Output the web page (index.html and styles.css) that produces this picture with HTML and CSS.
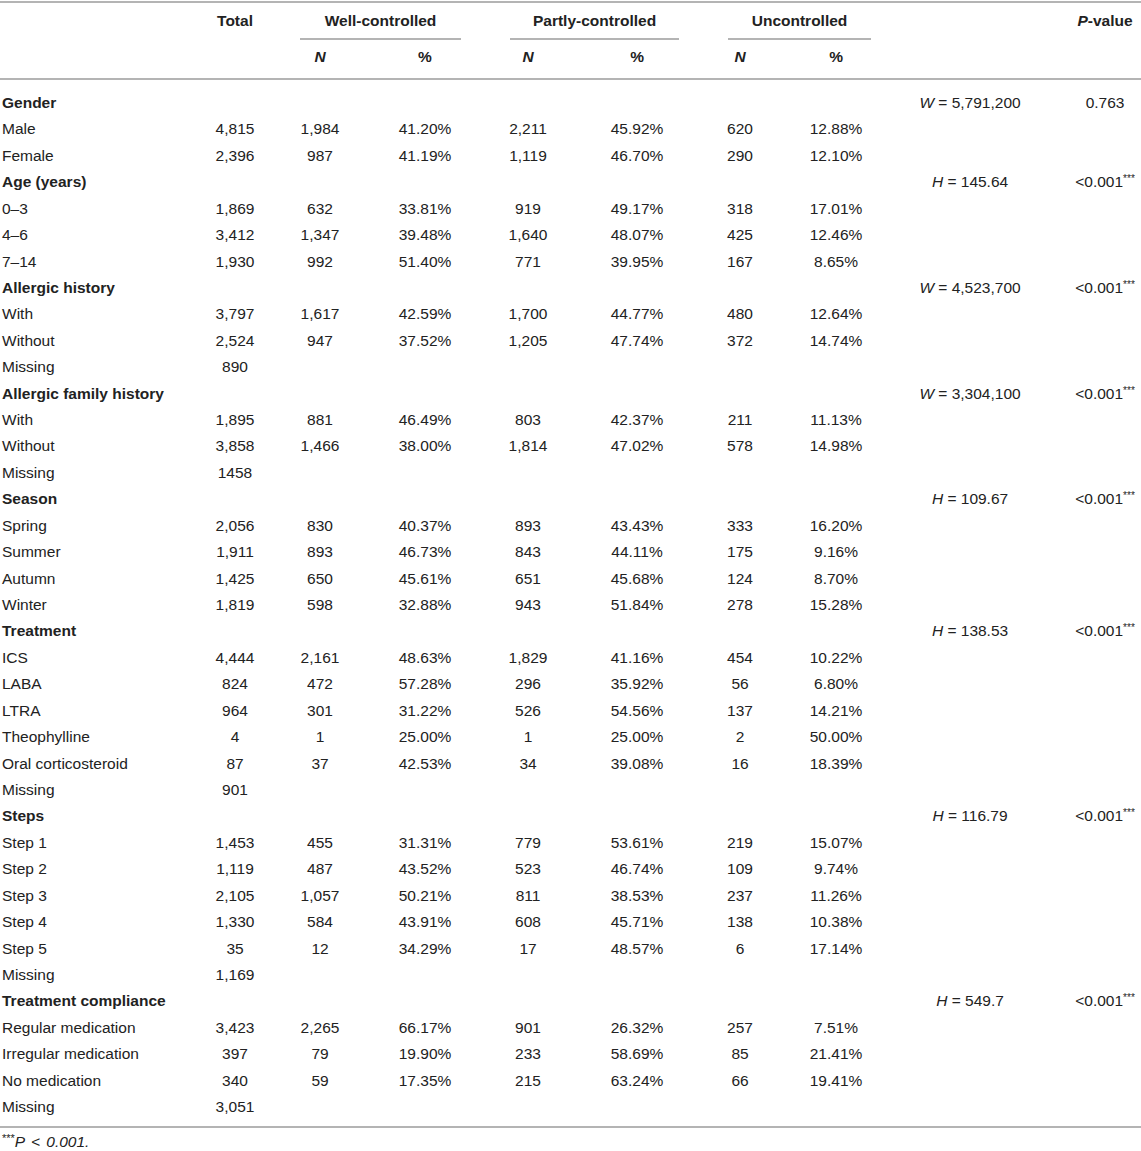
FILE: index.html
```html
<!DOCTYPE html>
<html lang="en">
<head>
<meta charset="utf-8">
<title>Asthma control table</title>
<link rel="stylesheet" href="styles.css">
</head>
<body>
<table class="tbl">
  <colgroup>
    <col class="c-label"><col class="c-total"><col class="c-wn"><col class="c-wp"><col class="c-pn"><col class="c-pp"><col class="c-un"><col class="c-up"><col class="c-stat"><col class="c-p">
  </colgroup>
  <thead>
    <tr class="h1">
      <th></th>
      <th>Total</th>
      <th colspan="2" class="grp"><div class="grp-in">Well-controlled</div></th>
      <th colspan="2" class="grp"><div class="grp-in">Partly-controlled</div></th>
      <th colspan="2" class="grp"><div class="grp-in">Uncontrolled</div></th>
      <th></th>
      <th class="pcol"><i>P</i>-value</th>
    </tr>
    <tr class="h2">
      <th></th><th></th>
      <th><i>N</i></th><th>%</th>
      <th><i>N</i></th><th>%</th>
      <th><i>N</i></th><th>%</th>
      <th></th><th></th>
    </tr>
  </thead>
  <tbody>
    <tr class="cat"><td>Gender</td><td></td><td></td><td></td><td></td><td></td><td></td><td></td><td><i>W</i> = 5,791,200</td><td class="pcol">0.763</td></tr>
    <tr><td>Male</td><td>4,815</td><td>1,984</td><td>41.20%</td><td>2,211</td><td>45.92%</td><td>620</td><td>12.88%</td><td></td><td></td></tr>
    <tr><td>Female</td><td>2,396</td><td>987</td><td>41.19%</td><td>1,119</td><td>46.70%</td><td>290</td><td>12.10%</td><td></td><td></td></tr>
    <tr class="cat"><td>Age (years)</td><td></td><td></td><td></td><td></td><td></td><td></td><td></td><td><i>H</i> = 145.64</td><td class="pcol">&lt;0.001<sup>***</sup></td></tr>
    <tr><td>0–3</td><td>1,869</td><td>632</td><td>33.81%</td><td>919</td><td>49.17%</td><td>318</td><td>17.01%</td><td></td><td></td></tr>
    <tr><td>4–6</td><td>3,412</td><td>1,347</td><td>39.48%</td><td>1,640</td><td>48.07%</td><td>425</td><td>12.46%</td><td></td><td></td></tr>
    <tr><td>7–14</td><td>1,930</td><td>992</td><td>51.40%</td><td>771</td><td>39.95%</td><td>167</td><td>8.65%</td><td></td><td></td></tr>
    <tr class="cat"><td>Allergic history</td><td></td><td></td><td></td><td></td><td></td><td></td><td></td><td><i>W</i> = 4,523,700</td><td class="pcol">&lt;0.001<sup>***</sup></td></tr>
    <tr><td>With</td><td>3,797</td><td>1,617</td><td>42.59%</td><td>1,700</td><td>44.77%</td><td>480</td><td>12.64%</td><td></td><td></td></tr>
    <tr><td>Without</td><td>2,524</td><td>947</td><td>37.52%</td><td>1,205</td><td>47.74%</td><td>372</td><td>14.74%</td><td></td><td></td></tr>
    <tr><td>Missing</td><td>890</td><td></td><td></td><td></td><td></td><td></td><td></td><td></td><td></td></tr>
    <tr class="cat"><td>Allergic family history</td><td></td><td></td><td></td><td></td><td></td><td></td><td></td><td><i>W</i> = 3,304,100</td><td class="pcol">&lt;0.001<sup>***</sup></td></tr>
    <tr><td>With</td><td>1,895</td><td>881</td><td>46.49%</td><td>803</td><td>42.37%</td><td>211</td><td>11.13%</td><td></td><td></td></tr>
    <tr><td>Without</td><td>3,858</td><td>1,466</td><td>38.00%</td><td>1,814</td><td>47.02%</td><td>578</td><td>14.98%</td><td></td><td></td></tr>
    <tr><td>Missing</td><td>1458</td><td></td><td></td><td></td><td></td><td></td><td></td><td></td><td></td></tr>
    <tr class="cat"><td>Season</td><td></td><td></td><td></td><td></td><td></td><td></td><td></td><td><i>H</i> = 109.67</td><td class="pcol">&lt;0.001<sup>***</sup></td></tr>
    <tr><td>Spring</td><td>2,056</td><td>830</td><td>40.37%</td><td>893</td><td>43.43%</td><td>333</td><td>16.20%</td><td></td><td></td></tr>
    <tr><td>Summer</td><td>1,911</td><td>893</td><td>46.73%</td><td>843</td><td>44.11%</td><td>175</td><td>9.16%</td><td></td><td></td></tr>
    <tr><td>Autumn</td><td>1,425</td><td>650</td><td>45.61%</td><td>651</td><td>45.68%</td><td>124</td><td>8.70%</td><td></td><td></td></tr>
    <tr><td>Winter</td><td>1,819</td><td>598</td><td>32.88%</td><td>943</td><td>51.84%</td><td>278</td><td>15.28%</td><td></td><td></td></tr>
    <tr class="cat"><td>Treatment</td><td></td><td></td><td></td><td></td><td></td><td></td><td></td><td><i>H</i> = 138.53</td><td class="pcol">&lt;0.001<sup>***</sup></td></tr>
    <tr><td>ICS</td><td>4,444</td><td>2,161</td><td>48.63%</td><td>1,829</td><td>41.16%</td><td>454</td><td>10.22%</td><td></td><td></td></tr>
    <tr><td>LABA</td><td>824</td><td>472</td><td>57.28%</td><td>296</td><td>35.92%</td><td>56</td><td>6.80%</td><td></td><td></td></tr>
    <tr><td>LTRA</td><td>964</td><td>301</td><td>31.22%</td><td>526</td><td>54.56%</td><td>137</td><td>14.21%</td><td></td><td></td></tr>
    <tr><td>Theophylline</td><td>4</td><td>1</td><td>25.00%</td><td>1</td><td>25.00%</td><td>2</td><td>50.00%</td><td></td><td></td></tr>
    <tr><td>Oral corticosteroid</td><td>87</td><td>37</td><td>42.53%</td><td>34</td><td>39.08%</td><td>16</td><td>18.39%</td><td></td><td></td></tr>
    <tr><td>Missing</td><td>901</td><td></td><td></td><td></td><td></td><td></td><td></td><td></td><td></td></tr>
    <tr class="cat"><td>Steps</td><td></td><td></td><td></td><td></td><td></td><td></td><td></td><td><i>H</i> = 116.79</td><td class="pcol">&lt;0.001<sup>***</sup></td></tr>
    <tr><td>Step 1</td><td>1,453</td><td>455</td><td>31.31%</td><td>779</td><td>53.61%</td><td>219</td><td>15.07%</td><td></td><td></td></tr>
    <tr><td>Step 2</td><td>1,119</td><td>487</td><td>43.52%</td><td>523</td><td>46.74%</td><td>109</td><td>9.74%</td><td></td><td></td></tr>
    <tr><td>Step 3</td><td>2,105</td><td>1,057</td><td>50.21%</td><td>811</td><td>38.53%</td><td>237</td><td>11.26%</td><td></td><td></td></tr>
    <tr><td>Step 4</td><td>1,330</td><td>584</td><td>43.91%</td><td>608</td><td>45.71%</td><td>138</td><td>10.38%</td><td></td><td></td></tr>
    <tr><td>Step 5</td><td>35</td><td>12</td><td>34.29%</td><td>17</td><td>48.57%</td><td>6</td><td>17.14%</td><td></td><td></td></tr>
    <tr><td>Missing</td><td>1,169</td><td></td><td></td><td></td><td></td><td></td><td></td><td></td><td></td></tr>
    <tr class="cat"><td>Treatment compliance</td><td></td><td></td><td></td><td></td><td></td><td></td><td></td><td><i>H</i> = 549.7</td><td class="pcol">&lt;0.001<sup>***</sup></td></tr>
    <tr><td>Regular medication</td><td>3,423</td><td>2,265</td><td>66.17%</td><td>901</td><td>26.32%</td><td>257</td><td>7.51%</td><td></td><td></td></tr>
    <tr><td>Irregular medication</td><td>397</td><td>79</td><td>19.90%</td><td>233</td><td>58.69%</td><td>85</td><td>21.41%</td><td></td><td></td></tr>
    <tr><td>No medication</td><td>340</td><td>59</td><td>17.35%</td><td>215</td><td>63.24%</td><td>66</td><td>19.41%</td><td></td><td></td></tr>
    <tr><td>Missing</td><td>3,051</td><td></td><td></td><td></td><td></td><td></td><td></td><td></td><td></td></tr>
  </tbody>
</table>
<p class="note"><sup>***</sup><i>P &lt; 0.001.</i></p>
</body>
</html>
```
FILE: styles.css
```css
html, body {
  margin: 0;
  padding: 0;
  background: #ffffff;
}
body {
  font-family: "Liberation Sans", Arial, Helvetica, sans-serif;
  font-size: 15.5px;
  color: #222222;
  width: 1141px;
}
.tbl {
  width: 1141px;
  table-layout: fixed;
  border-collapse: collapse;
  margin-top: 1px;
  border-top: 2px solid #b4b4b4;
  border-bottom: 2px solid #b4b4b4;
}
.c-label { width: 195px; }
.c-total { width: 80px; }
.c-wn { width: 90px; }
.c-wp { width: 120px; }
.c-pn { width: 86px; }
.c-pp { width: 132px; }
.c-un { width: 74px; }
.c-up { width: 118px; }
.c-stat { width: 150px; }
.c-p { width: 96px; }

th, td {
  padding: 0;
  text-align: center;
  vertical-align: top;
  white-space: nowrap;
}
th {
  font-weight: bold;
  line-height: 18px;
}
.h1 th {
  padding-top: 9px;
  padding-bottom: 10px;
}
.h1 th.grp {
  padding: 9px 24px 0 25px;
}
.grp-in {
  padding-bottom: 8px;
  border-bottom: 2px solid #b4b4b4;
}
.h2 th {
  padding-top: 8px;
  padding-bottom: 12px;
  border-bottom: 2px solid #b4b4b4;
}
td {
  line-height: 26.42px;
}
td:first-child {
  text-align: left;
  padding-left: 2px;
}
.cat td:first-child {
  font-weight: bold;
}
.pcol {
  padding-left: 24px;
}
th.pcol {
  padding-left: 24px;
}
tbody tr:first-child td {
  padding-top: 10px;
}
tbody tr:last-child td {
  padding-bottom: 6px;
}
sup {
  font-size: 10px;
  line-height: 0;
  vertical-align: 5px;
}
.note {
  margin: 6px 0 0 2px;
  font-size: 15.5px;
  line-height: 15px;
  word-spacing: 2px;
}
.note sup {
  font-size: 11px;
  vertical-align: 5px;
}
```
